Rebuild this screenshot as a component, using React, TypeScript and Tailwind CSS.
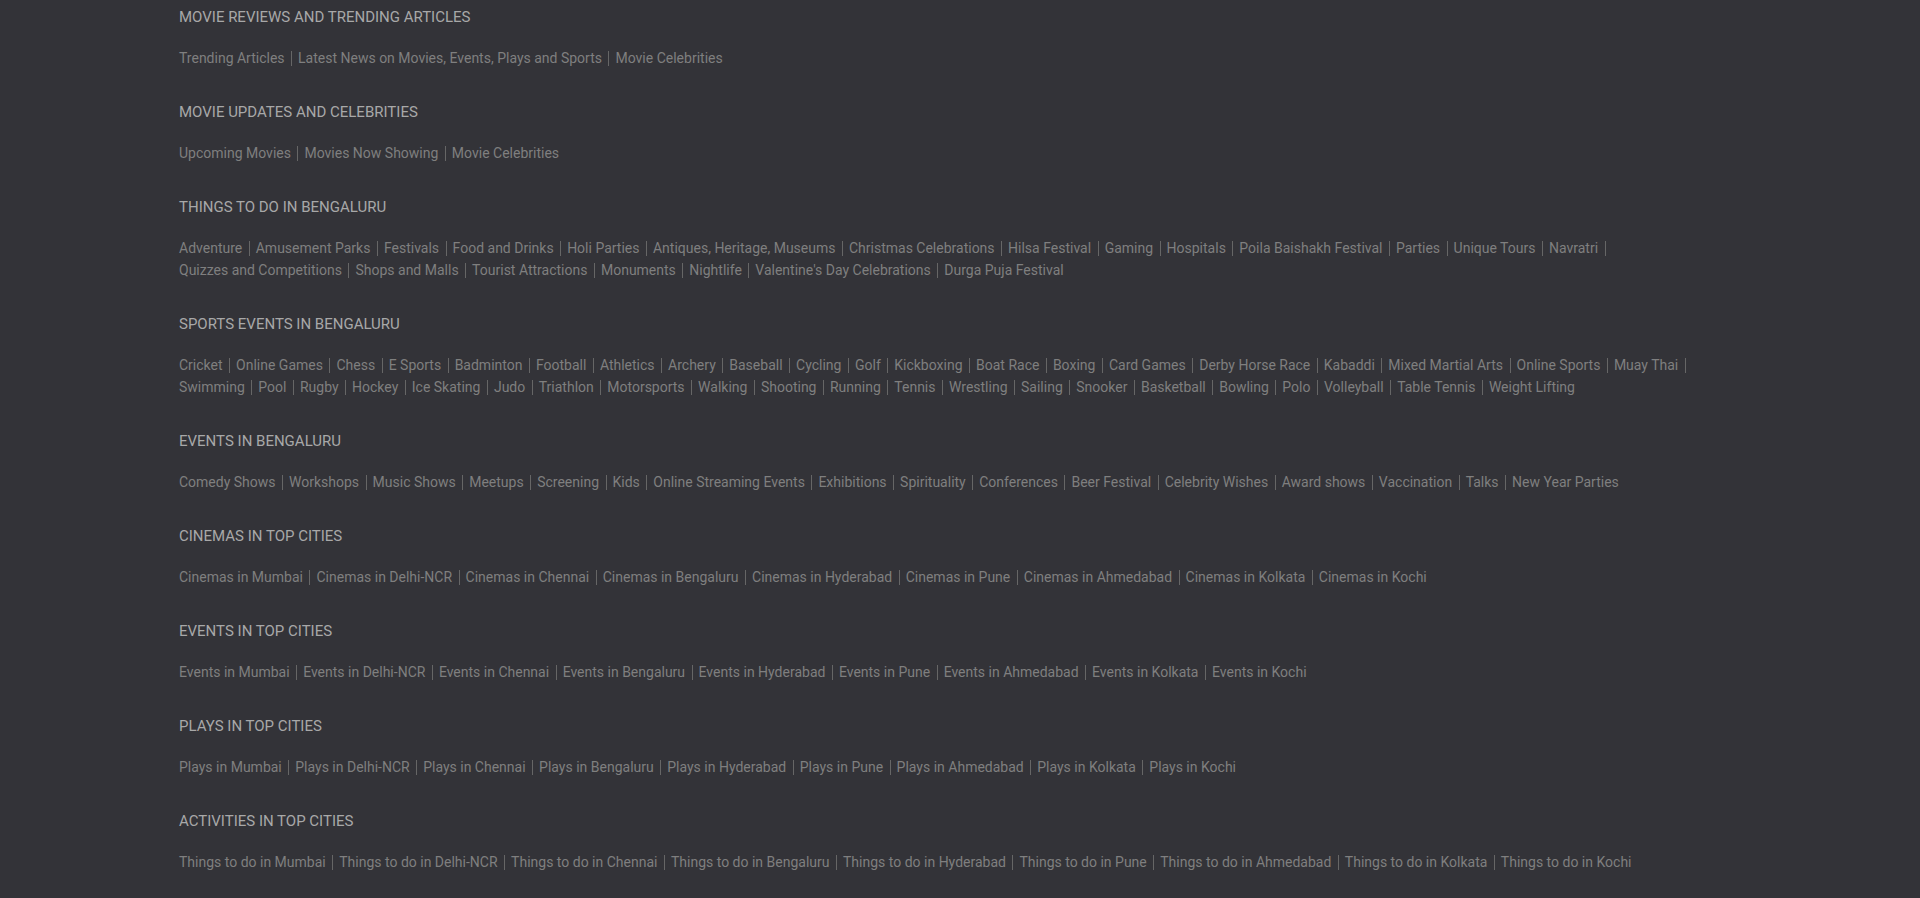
import React from 'react';

const cities = ['Mumbai', 'Delhi-NCR', 'Chennai', 'Bengaluru', 'Hyderabad', 'Pune', 'Ahmedabad', 'Kolkata', 'Kochi'];

const sections: { title: string; links: string[] }[] = [
  {
    title: 'Movie Reviews and Trending Articles',
    links: ['Trending Articles', 'Latest News on Movies, Events, Plays and Sports', 'Movie Celebrities'],
  },
  {
    title: 'Movie Updates and Celebrities',
    links: ['Upcoming Movies', 'Movies Now Showing', 'Movie Celebrities'],
  },
  {
    title: 'Things to do in Bengaluru',
    links: [
      'Adventure', 'Amusement Parks', 'Festivals', 'Food and Drinks', 'Holi Parties', 'Antiques, Heritage, Museums',
      'Christmas Celebrations', 'Hilsa Festival', 'Gaming', 'Hospitals', 'Poila Baishakh Festival', 'Parties',
      'Unique Tours', 'Navratri', 'Quizzes and Competitions', 'Shops and Malls', 'Tourist Attractions', 'Monuments',
      'Nightlife', "Valentine's Day Celebrations", 'Durga Puja Festival',
    ],
  },
  {
    title: 'Sports Events in Bengaluru',
    links: [
      'Cricket', 'Online Games', 'Chess', 'E Sports', 'Badminton', 'Football', 'Athletics', 'Archery', 'Baseball',
      'Cycling', 'Golf', 'Kickboxing', 'Boat Race', 'Boxing', 'Card Games', 'Derby Horse Race', 'Kabaddi',
      'Mixed Martial Arts', 'Online Sports', 'Muay Thai', 'Swimming', 'Pool', 'Rugby', 'Hockey', 'Ice Skating', 'Judo',
      'Triathlon', 'Motorsports', 'Walking', 'Shooting', 'Running', 'Tennis', 'Wrestling', 'Sailing', 'Snooker',
      'Basketball', 'Bowling', 'Polo', 'Volleyball', 'Table Tennis', 'Weight Lifting',
    ],
  },
  {
    title: 'Events in Bengaluru',
    links: [
      'Comedy Shows', 'Workshops', 'Music Shows', 'Meetups', 'Screening', 'Kids', 'Online Streaming Events',
      'Exhibitions', 'Spirituality', 'Conferences', 'Beer Festival', 'Celebrity Wishes', 'Award shows', 'Vaccination',
      'Talks', 'New Year Parties',
    ],
  },
  { title: 'Cinemas in Top Cities', links: cities.map((c) => `Cinemas in ${c}`) },
  { title: 'Events in Top Cities', links: cities.map((c) => `Events in ${c}`) },
  { title: 'Plays in Top Cities', links: cities.map((c) => `Plays in ${c}`) },
  { title: 'Activities in Top Cities', links: cities.map((c) => `Things to do in ${c}`) },
];

export default function App() {
  return (
    <div className="min-h-screen bg-[#333338] pt-[7px] font-['Roboto',_'Liberation_Sans',_sans-serif]">
      <div className="mx-auto w-[1562px]">
        {sections.map((s) => (
          <div key={s.title} className="mb-[33px]">
            <h3 className="text-[15px] leading-5 font-normal uppercase text-[#a8a8a8]">{s.title}</h3>
            <div className="mt-5 flex flex-wrap text-[14px] text-[#7f7f7f]">
              {s.links.map((l, i) => (
                <div key={l} className="flex h-[22px] items-center">
                  <a href="#" className="hover:text-[#a5a5a5]">{l}</a>
                  {/* divider between links, none after the last one */}
                  {i < s.links.length - 1 && <span className="ml-[6.5px] mr-[6px] h-[15px] w-px bg-[#666666]" />}
                </div>
              ))}
            </div>
          </div>
        ))}
      </div>
    </div>
  );
}
